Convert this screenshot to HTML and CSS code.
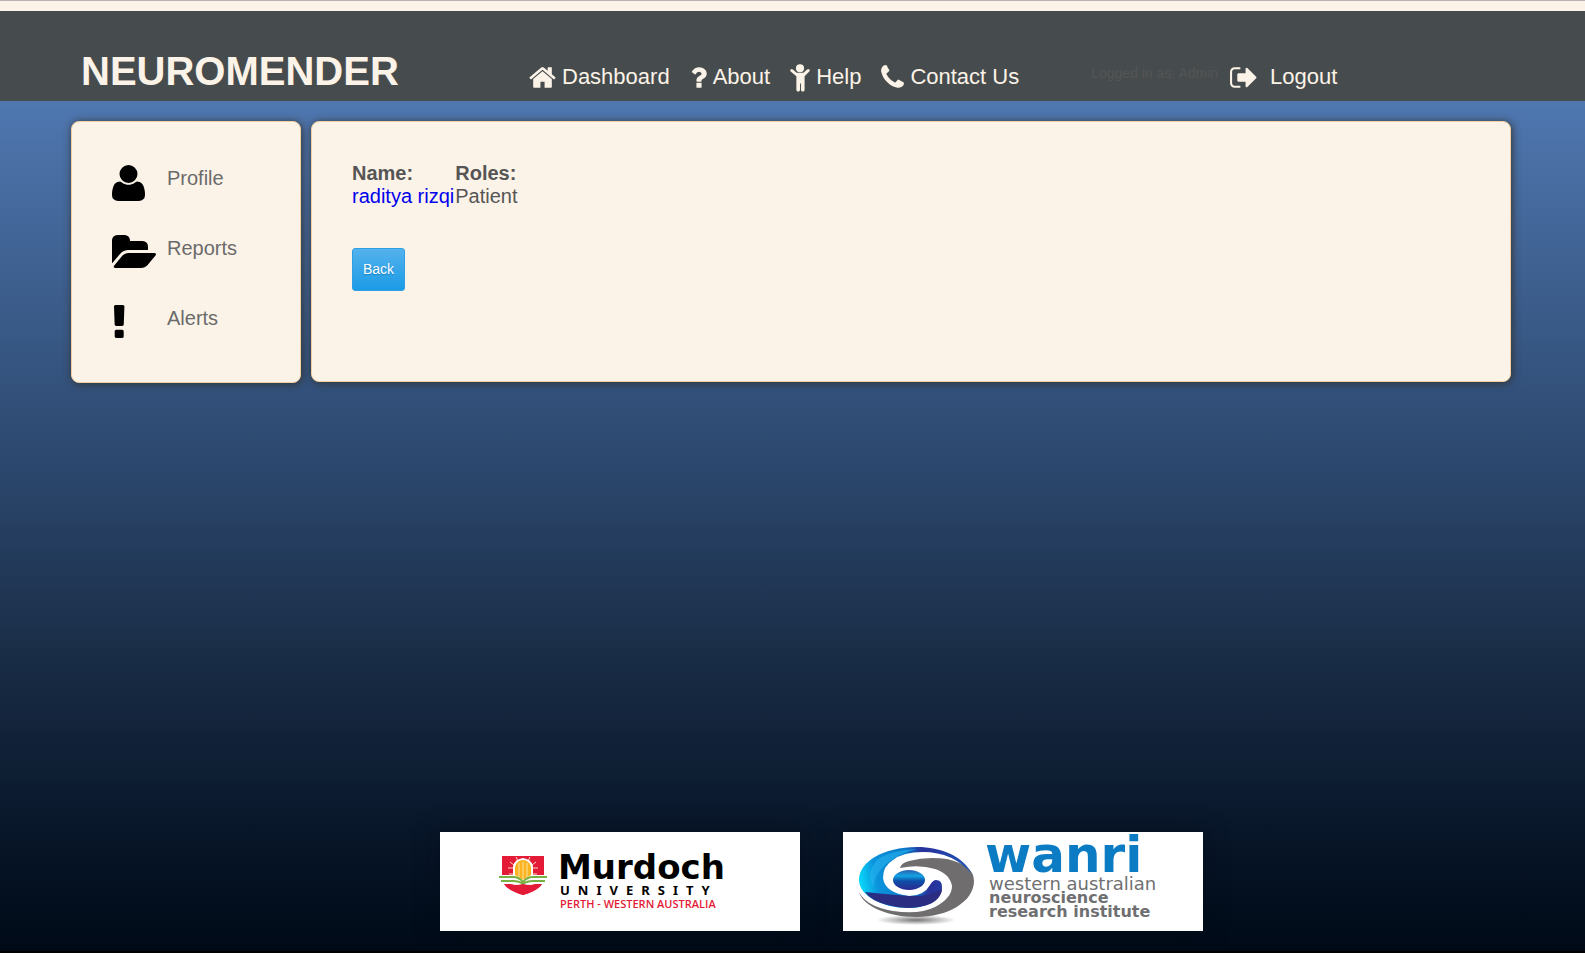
FILE: index.html
```html
<!DOCTYPE html>
<html lang="en">
<head>
<meta charset="utf-8">
<title>Neuromender</title>
<link rel="stylesheet" href="styles.css">
</head>
<body>
<header class="site-header">
  <h1 class="brand">NEUROMENDER</h1>
  <nav class="main-nav">
    <a class="nav-link" href="#dashboard"><svg class="nav-icon" viewBox="64 0 1664 1792" width="27" height="29" aria-hidden="true"><path d="M1472 992v480q0 26-19 45t-45 19h-384v-384h-256v384h-384q-26 0-45-19t-19-45v-480q0-1 .5-3t.5-3l575-474 575 474q1 2 1 6zm223-69l-62 74q-8 9-21 11h-3q-13 0-21-7l-692-577-692 577q-12 8-24 7-13-2-21-11l-62-74q-8-10-7-23.5t11-21.5l719-599q32-26 76-26t76 26l244 204v-195q0-14 9-23t23-9h192q14 0 23 9t9 23v408l219 182q10 8 11 21.5t-7 23.5z"/></svg>Dashboard</a>
    <a class="nav-link" href="#about"><svg class="nav-icon" viewBox="384 0 1024 1792" width="17" height="29" aria-hidden="true"><path d="M1088 1256v240q0 16-12 28t-28 12h-240q-16 0-28-12t-12-28v-240q0-16 12-28t28-12h240q16 0 28 12t12 28zm316-600q0 54-15.5 101t-35 76.5-55 59.5-57.5 43.5-61 35.5q-41 23-68.5 65t-27.5 67q0 17-12 32.5t-28 15.5h-240q-15 0-25.5-18.5t-10.5-37.5v-45q0-83 65-156.5t143-108.5q59-27 84-56t25-76q0-42-46.5-74t-107.5-32q-65 0-108 29-35 25-107 115-13 16-31 16-12 0-25-8l-164-125q-13-10-15.5-25t5.5-28q160-266 464-266 80 0 161 31t146 83 106 127.5 41 158.5z"/></svg>About</a>
    <a class="nav-link" href="#help"><svg class="nav-icon" viewBox="280 0 1216 1792" width="20" height="29" aria-hidden="true"><path d="M1464 532l-292 292v824q0 46-33 79t-79 33-79-33-33-79v-384h-60v384q0 46-33 79t-79 33-79-33-33-79V824L312 532q-28-28-28-68t28-68 68-28 68 28l228 200h424l228-200q28-28 68-28t68 28 28 68-28 68z"/><circle cx="888" cy="320" r="250"/></svg>Help</a>
    <a class="nav-link" href="#contact"><svg class="nav-icon" viewBox="192 0 1408 1792" width="23" height="29" aria-hidden="true"><path d="M1600 1240q0 27-10 70.500t-21 68.500q-21 50-122 106-94 51-186 51-27 0-53-3.500t-57.500-12.500-47-14.500-55.500-20.500-49-18q-98-35-175-83-127-79-264-216t-216-264q-48-77-83-175-3-9-18-49t-20.500-55.500-14.500-47-12.500-57.500-3.500-53q0-92 51-186 56-101 106-122 25-11 68.500-21t70.500-10q14 0 21 3 18 6 53 76 11 19 30 54t35 63.500 31 53.500q3 4 17.500 25t21.500 35.500 7 28.500q0 20-28.500 50t-62 55-62 53-28.500 46q0 9 5 22.500t8.500 20.500 14 24 11.500 19q76 137 174 235t235 174q2 1 19 11.500t24 14 20.500 8.500 22.500 5q18 0 46-28.500t53-62 55-62 50-28.500q14 0 28.500 7t35.500 21.500 25 17.500q25 15 53.500 31t63.500 35 54 30q70 35 76 53 3 7 3 21z"/></svg>Contact Us</a>
  </nav>
  <div class="account">
    <span class="account-name">Logged in as: Admin</span>
    <a class="nav-link logout" href="#logout"><svg class="nav-icon" viewBox="64 0 1664 1792" width="27" height="29" aria-hidden="true"><path d="M704 1440q0 4 1 20t.5 26.500-3 23.500-10 19.500-20.500 6.500h-320q-119 0-203.500-84.500t-84.500-203.500v-704q0-119 84.500-203.500t203.500-84.500h320q13 0 22.500 9.500t9.500 22.500q0 4 1 20t.5 26.500-3 23.500-10 19.500-20.500 6.500h-320q-66 0-113 47t-47 113v704q0 66 47 113t113 47h312l11.500 1 11.500 3 8 5.500 7 9 2 13.500zm992-544q0 26-19 45l-544 544q-19 19-45 19t-45-19-19-45v-288h-448q-26 0-45-19t-19-45v-384q0-26 19-45t45-19h448v-288q0-26 19-45t45-19 45 19l544 544q19 19 19 45z"/></svg>Logout</a>
  </div>
</header>

<div class="page">
<div class="layout">
  <aside class="card sidebar">
    <a class="side-link" href="#profile"><span class="side-icon"><svg viewBox="192 0 1408 1792" width="33" height="42" aria-hidden="true"><path d="M1600 1405q0 120-73 189.500t-194 69.500h-874q-121 0-194-69.500t-73-189.500q0-53 3.500-103.500t14-109 26.500-108.500 43-97.500 62-81 85.500-53.500 111.500-20q9 0 42 21.500t74.500 48 108 48 133.500 21.500 133.500-21.500 108-48 74.500-48 42-21.500q61 0 111.500 20t85.500 53.500 62 81 43 97.500 26.500 108.500 14 109 3.500 103.500zm-320-893q0 159-112.500 271.500t-271.500 112.500-271.500-112.500-112.500-271.500 112.500-271.500 271.500-112.500 271.500 112.500 112.500 271.500z"/></svg></span>Profile</a>
    <a class="side-link" href="#reports"><span class="side-icon"><svg viewBox="-64 0 1879 1792" width="44" height="42" aria-hidden="true"><path d="M1815 952q0 31-31 66l-336 396q-43 51-120.500 86.500t-143.500 35.500h-1088q-34 0-60.500-13t-26.500-43q0-31 31-66l336-396q43-51 120.500-86.500t143.500-35.500h1088q34 0 60.500 13t26.500 43zm-343-344v160h-832q-94 0-197 47.500t-164 119.500l-337 396-5 6q0-4-.5-12.500t-.5-12.500v-960q0-92 66-158t158-66h320q92 0 158 66t66 158v32h544q92 0 158 66t66 158z"/></svg></span>Reports</a>
    <a class="side-link" href="#alerts"><span class="side-icon"><svg viewBox="589 0 597 1792" width="14" height="42" aria-hidden="true"><path d="M1088 1248v224q0 26-19 45t-45 19h-256q-26 0-45-19t-19-45v-224q0-26 19-45t45-19h256q26 0 45 19t19 45zm30-1056l-28 768q-1 26-20.500 45t-45.500 19h-256q-26 0-45.500-19t-20.500-45l-28-768q-1-26 17.500-45t44.500-19h320q26 0 44.500 19t17.500 45z"/></svg></span>Alerts</a>
  </aside>
  <main class="card content">
    <table class="people">
      <thead><tr><th scope="col">Name:</th><th scope="col">Roles:</th></tr></thead>
      <tbody><tr><td><a href="#raditya">raditya rizqi</a></td><td>Patient</td></tr></tbody>
    </table>
    <button class="back" type="button">Back</button>
  </main>
</div>

<footer class="partners">
  <svg class="partner" viewBox="0 0 360 99" role="img" aria-label="Murdoch University">
    <path fill="#e31b37" d="M62 24h42v22q0 11-21 17q-21-6-21-17z"/>
    <g stroke="#fbd9c0" stroke-width="1"><path d="M76 25l2 4M90 25l-2 4M70 30l4 3M96 30l-4 3M68 36h5M98 36h-5M69 42h4M97 42h-4"/></g>
    <path fill="#fff" d="M73 49V34q2-7 10-8q8 1 10 8v15z"/>
    <path fill="#fbb321" d="M75 47V35q2-7 8-7t8 7v12l-8 3z"/>
    <path stroke="#fde3a0" d="M79 31v17M83 30v19M87 31v17"/>
    <path fill="#fff" d="M60 43h15l8 5 8-5h15v9H95l-12 3-12-3H60z"/>
    <path fill="none" stroke="#79b043" stroke-width="2" d="M59 45h14q6 0 10 5q4-5 10-5h14M61 49h12q6 0 10 3q4-3 10-3h12"/>
    <path fill="#e31b37" d="M65 53h9q6 0 9-1q3 1 9 1h9q-5 6-18 10q-13-4-18-10z"/>
    <text class="mu-name" x="118" y="47">Murdoch</text>
    <text class="mu-sub" x="120" y="63">UNIVERSITY</text>
    <text class="mu-place" x="120" y="76">PERTH - WESTERN AUSTRALIA</text>
  </svg>
  <svg class="partner" viewBox="0 0 360 99" role="img" aria-label="Western Australian Neuroscience Research Institute">
    <defs>
      <linearGradient id="swirl" x1="0" y1="0.500" x2="1" y2="0.400"><stop offset="0" stop-color="#08d8fa"/><stop offset="0.150" stop-color="#0b93dc"/><stop offset="0.450" stop-color="#0b78c8"/><stop offset="0.600" stop-color="#29309a"/><stop offset="1" stop-color="#1f55b5"/></linearGradient>
      <linearGradient id="pupil" x1="0" y1="0" x2="0" y2="1"><stop offset="0" stop-color="#2c5fb0"/><stop offset="0.300" stop-color="#12a4e4"/><stop offset="0.550" stop-color="#0e4ea8"/><stop offset="1" stop-color="#2a2a90"/></linearGradient>
      <radialGradient id="ground"><stop offset="0" stop-color="#777"/><stop offset="1" stop-color="#fff"/></radialGradient>
    </defs>
    <ellipse cx="73" cy="88" rx="40" ry="5" fill="url(#ground)"/>
    <path fill="#6f6d6e" d="M57 36Q58 31 66 29Q84 24 104 27Q131 33 131 49C131 70 104 85 74 85C44 85 20 74 16 60Q24 75 50 79Q76 83 92 75Q109 66 109 54Q107 42 92 37Q76 32 57 36z"/>
    <path fill="url(#swirl)" d="M129 42C120 24 98 15 74 15C40 15 16 30 16 48C16 64 40 76 65 76C85 76 99 68 99 55Q99 48 93 48Q90 48 87 53Q81 64 66 64Q42 61 40 46Q40 34 50 28Q60 20 80 20Q110 20 129 42z"/>
    <path fill="#2b2d83" d="M22 60Q40 62 66 64Q85 65 99 57Q98 68 84 73Q66 79 45 73Q28 69 22 60z"/>
    <path fill="#27b4ee" opacity="0.600" d="M34 28Q48 18 74 17Q54 22 42 33Q32 42 30 55Q22 42 34 28z"/>
    <ellipse cx="66" cy="48" rx="16" ry="10" fill="url(#pupil)"/>
    <text class="wa-name" x="142" y="40">wanri</text>
    <text class="wa-line" x="146" y="58">western australian</text>
    <text class="wa-line wa-strong" x="146" y="71">neuroscience</text>
    <text class="wa-line wa-strong" x="146" y="85">research institute</text>
  </svg>
</footer>
</div>
</body>
</html>
```

FILE: styles.css
```css
* {
  box-sizing: border-box;
}

body {
  margin: 0;
  min-height: 100vh;
  display: flex;
  flex-direction: column;
  border-top: 1px solid #b8b4b6;
  border-bottom: 2px solid #000;
  background: #000a17;
  color: #555;
  font: 20px/23px "Liberation Sans", Arial, sans-serif;
}

a {
  text-decoration: none;
}

.site-header {
  display: flex;
  align-items: flex-end;
  height: 100px;
  padding: 0 74px 7px 81px;
  border-top: 10px solid #fcf3e8;
  background: #464c4d;
}

.brand {
  flex: 0 0 448px;
  margin: 0;
  font-size: 40px;
  line-height: 46px;
}

.brand,
.nav-link {
  color: #fcf3e8;
}

.main-nav {
  display: flex;
  gap: 20px;
}

.nav-link {
  display: flex;
  align-items: center;
  gap: 6px;
  font-size: 22px;
  line-height: 34px;
}

.nav-icon {
  fill: currentColor;
}

.account {
  display: flex;
  align-items: center;
  gap: 12px;
  margin-left: 72px;
}

.account-name {
  padding-bottom: 9px;
  font-size: 14px;
  line-height: 16px;
}

.logout {
  gap: 13px;
}

.page {
  flex: 1;
  display: flex;
  flex-direction: column;
  background: linear-gradient(#4f77b0, #2a456a 45%, #192c45 66%, #081629 86%, #000a17);
}

.layout {
  display: flex;
  align-items: flex-start;
  gap: 10px;
  padding: 20px 74px 20px 71px;
}

.card {
  border: 1px solid #f0cfa0;
  border-radius: 8px;
  background: #fcf3e8;
  box-shadow: 1px 1px 8px #333;
}

.sidebar {
  display: grid;
  gap: 28px;
  flex: 0 0 230px;
  padding: 40px 40px 38px;
}

.side-link {
  display: flex;
  color: #6b6b6b;
  line-height: 32px;
}

.side-icon {
  flex: 0 0 55px;
  height: 42px;
}

.side-icon svg {
  display: block;
}

.content {
  flex: 1;
  padding: 40px 40px 90px;
}

.people {
  border-collapse: collapse;
}

.people th,
.people td {
  padding: 0 1px 0 0;
  text-align: left;
}

.people a {
  color: #00e;
}

.back {
  display: block;
  margin-top: 40px;
  padding: 12px 10px 13px;
  border: 1px solid #2d9fe4;
  border-radius: 3px;
  background: linear-gradient(#54b2ec, #1b9be6);
  color: #fff;
  font: 14px/16px "Liberation Sans", Arial, sans-serif;
  text-shadow: 0 1px 1px #1c7fbd;
}

.partners {
  display: flex;
  justify-content: center;
  gap: 43px;
  margin-top: auto;
  padding: 0 0 20px 58px;
}

.partner {
  width: 360px;
  height: 99px;
  background: #fff;
  box-shadow: 0 0 24px #000a1766;
}

.mu-name {
  font: bold 34px "DejaVu Sans", sans-serif;
}

.mu-sub {
  font: bold 13px "Noto Sans", sans-serif;
  letter-spacing: 8px;
}

.mu-place {
  fill: #e31b37;
  font: 600 11px "Open Sans", sans-serif;
}

.wa-name {
  fill: #0b7cc4;
  font: bold 50px "DejaVu Sans", sans-serif;
}

.wa-line {
  fill: #6f6f71;
  font: 18px "DejaVu Sans", sans-serif;
}

.wa-strong {
  font-size: 16px;
  font-weight: bold;
}
```
